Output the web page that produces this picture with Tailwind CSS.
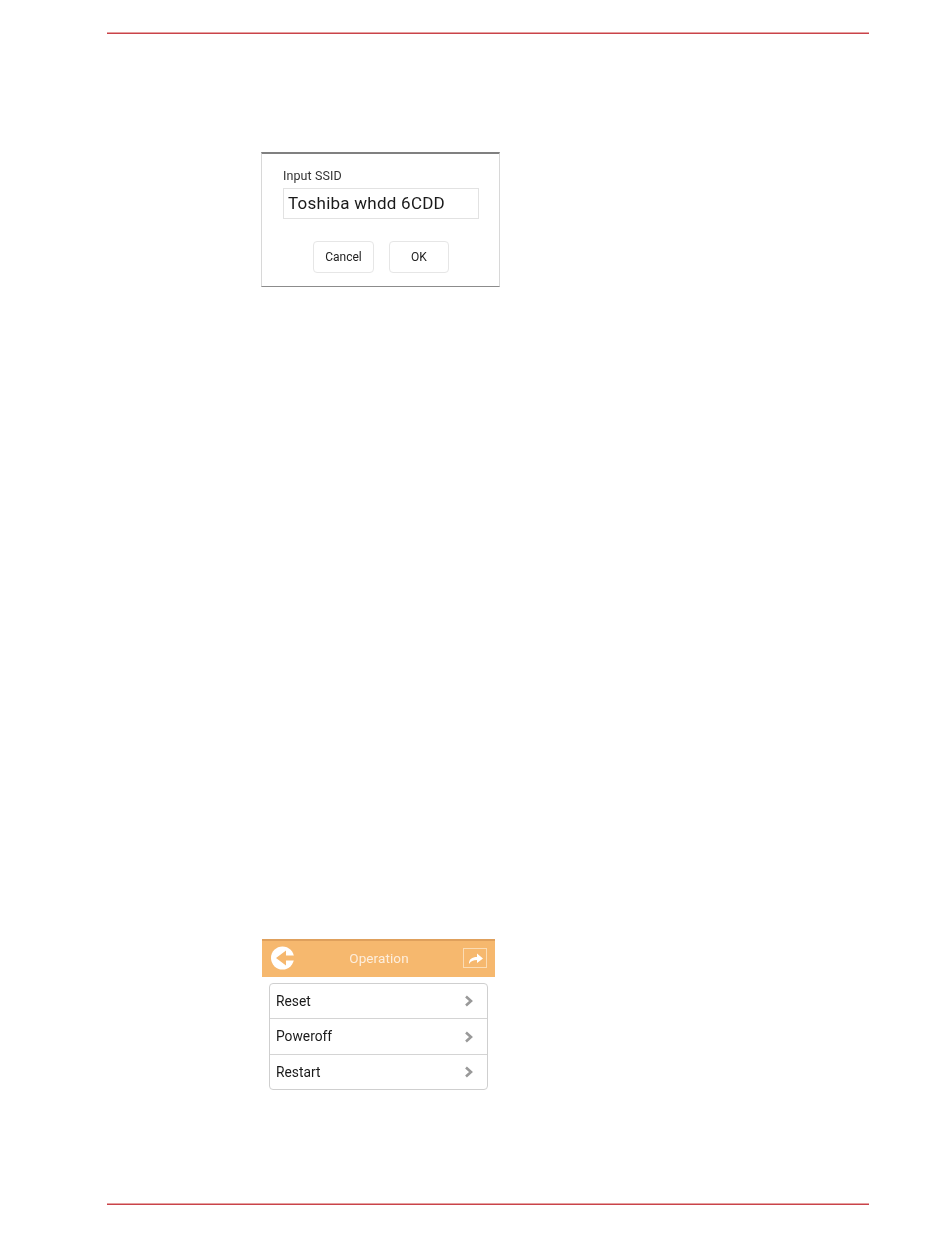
<!DOCTYPE html>
<html>
<head>
<meta charset="utf-8">
<script src="https://cdn.jsdelivr.net/npm/@tailwindcss/browser@4"></script>
</head>
<body class="bg-white font-['Roboto','Liberation_Sans',sans-serif]">
<div class="relative w-[950px] h-[1244px] overflow-hidden flex flex-col pt-[32px]">
  <div class="ml-[107px] w-[762px] h-[2px] bg-[#c9434a] border-t border-t-[#e6a0a0]"></div>

  <div class="ml-[261px] mt-[118px] w-[239px] h-[135px] bg-white border-x border-x-[#d8d8d8] border-t-2 border-t-[#808080] border-b border-b-[#8c8c8c] flex flex-col pl-[21px] pr-[20px] blur-[0.3px]">
    <div class="text-[12.500px] leading-[14px] text-[#333] mt-[15px] tracking-[0.1px]">Input SSID</div>
    <div class="mt-[5px] w-[196px] h-[31px] border border-[#e2e2e2] flex items-center pl-[4px] text-[17px] text-[#1a1a1a] tracking-[0.25px]">Toshiba whdd 6CDD</div>
    <div class="mt-[22px] flex justify-center gap-[15px]">
      <div class="w-[61px] h-[32px] border border-[#e6e6e6] rounded-[4px] flex items-center justify-center text-[12px] text-[#222]">Cancel</div>
      <div class="w-[60px] h-[32px] border border-[#e6e6e6] rounded-[4px] flex items-center justify-center text-[12px] text-[#222]">OK</div>
    </div>
  </div>

  <div class="ml-[262px] mt-[652px] w-[233px]">
    <div class="h-[38px] bg-[#f6b86e] border-t-2 border-t-[#dfa05c] flex items-center justify-between pl-[9px] pr-[8px] pb-[2px] blur-[0.3px]">
      <svg width="24" height="24" viewBox="0 0 24 24"><circle cx="11.500" cy="12" r="11.500" fill="#fff"/><path d="M5 12L15 4.500V9.500H24V14.500H15V19.500Z" fill="#f6b86e"/></svg>
      <span class="text-[13.500px] text-[#fdeedd] tracking-[0.1px]">Operation</span>
      <div class="w-[24px] h-[20px] border border-[#fbdcb4] flex items-center justify-center">
        <svg width="17" height="14" viewBox="0 0 17 14"><path d="M2 13c0-5 3-7 8-7V2.500l6 5-6 4.500V9c-4 0-6 1-8 4z" fill="#fff"/></svg>
      </div>
    </div>
    <div class="mt-[6px] ml-[7px] w-[219px] h-[107px] border border-[#cfcfcf] rounded-[4px] flex flex-col text-[13.800px] text-[#1a1a1a] blur-[0.3px]">
      <div class="h-[35px] pl-[6px] pr-[14px] flex items-center justify-between border-b border-[#d4d4d4]">Reset<svg width="9" height="12" viewBox="0 0 9 12"><path d="M2 1.500l5 4.500-5 4.500" fill="none" stroke="#999" stroke-width="2.600"/></svg></div>
      <div class="h-[36px] pl-[6px] pr-[14px] flex items-center justify-between border-b border-[#d4d4d4]">Poweroff<svg width="9" height="12" viewBox="0 0 9 12"><path d="M2 1.500l5 4.500-5 4.500" fill="none" stroke="#999" stroke-width="2.600"/></svg></div>
      <div class="flex-1 pl-[6px] pr-[14px] flex items-center justify-between">Restart<svg width="9" height="12" viewBox="0 0 9 12"><path d="M2 1.500l5 4.500-5 4.500" fill="none" stroke="#999" stroke-width="2.600"/></svg></div>
    </div>
  </div>

  <div class="ml-[107px] mt-[113px] w-[762px] h-[2px] bg-[#c9434a] border-t border-t-[#e6a0a0]"></div>
</div>
</body>
</html>
